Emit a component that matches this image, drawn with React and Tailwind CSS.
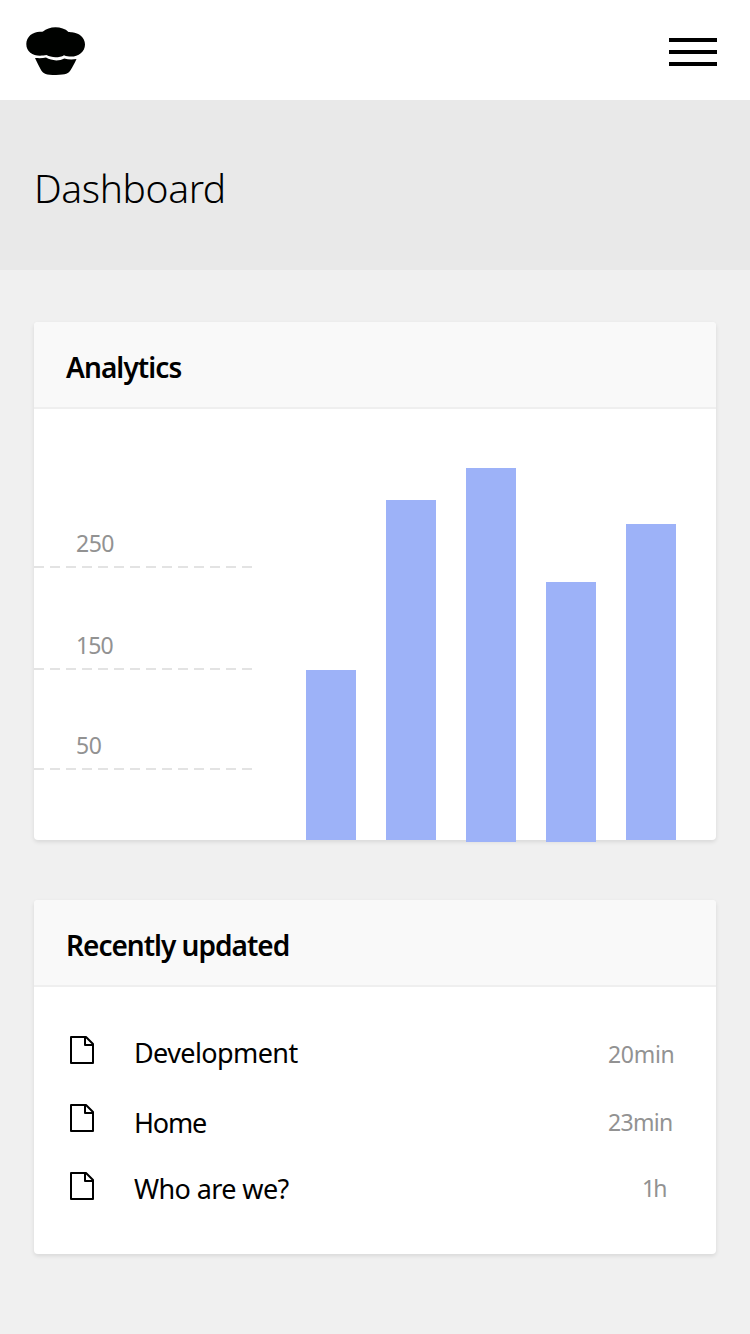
const bars = [
  { height: 'h-[170px]', offset: 'mb-0' },
  { height: 'h-[340px]', offset: 'mb-0' },
  { height: 'h-[374px]', offset: '-mb-0.5' },
  { height: 'h-[260px]', offset: '-mb-0.5' },
  { height: 'h-[316px]', offset: 'mb-0' },
];

const ticks = [
  { label: '250', space: 'pt-[122px]', tracking: 'tracking-[-0.5px]' },
  { label: '150', space: 'pt-[65px]', tracking: 'tracking-[-0.9px]' },
  { label: '50', space: 'pt-[63px]', tracking: 'tracking-[-0.5px]' },
];

const pages = [
  { name: 'Development', time: '20min', nameClass: 'mt-[3px] tracking-[-0.6px]', timeClass: 'mt-3 tracking-[-0.3px]' },
  { name: 'Home', time: '23min', nameClass: 'mt-[5px] tracking-[-1.2px]', timeClass: 'mt-3 tracking-[-0.7px]' },
  { name: 'Who are we?', time: '1h', nameClass: 'mt-[3px] tracking-[-0.6px]', timeClass: 'mt-2.5 ml-[34px] tracking-[-2px]' },
];

function Logo() {
  return (
    <svg className="h-12 w-[60px]" viewBox="0 0 60 48" fill="#000200" aria-hidden="true">
      <path d="M17 4.500C20 1.800 24.500.2 29.500.2s9.800 1.500 13 4.700c1.200 0 1.500.1 3.500.4 7 .6 13 5.500 13 12.200 0 7.300-6.500 12.100-14 12.100-2.500 0-4.500-.4-7-1.400-4.500 2.700-12.500 2.700-17.500-.1-2 .6-4 .6-6.500.6C6.500 28.700.3 24.500.3 17 .3 9.500 7 4.600 14 4.700c1.200 0 2 .1 3-.2Z" />
      <path d="M9 31.100c4 .2 8 .3 11-.5 5.500 3.400 13.500 3.700 18.300.8 3.700 1.200 8 1.300 12.200.6-2 4.500-4 8-6 11.300-1.800 3.200-4.500 4.600-14.500 4.600s-12.700-1.400-14.700-4.500C13.200 40 11 35.500 9 31.100Z" />
    </svg>
  );
}

function FileIcon() {
  return (
    <svg className="mt-1.5 h-7 w-6 shrink-0" viewBox="0 0 24 28" fill="none" stroke="#000" strokeWidth="2" strokeLinejoin="round" aria-hidden="true">
      <path d="M1 1h15l7 7v19H1Z" />
      <path d="M15 1v8h8" />
    </svg>
  );
}

function Card({ title, titleClass, className, children }) {
  return (
    <section className={`rounded bg-white shadow-[0_2px_4px_rgba(0,0,0,0.1)] ${className}`}>
      <header className="h-[87px] rounded-t border-b-2 border-[#efefef] bg-[#f9f9f9] pt-[25px] pl-8">
        <h2 className={`text-[28px] leading-10 font-semibold whitespace-nowrap ${titleClass}`}>{title}</h2>
      </header>
      {children}
    </section>
  );
}

export default function App() {
  return (
    <div className="min-h-[1334px] bg-[#f0f0f0] font-['Noto_Sans',sans-serif] text-black">
      <nav className="flex h-[100px] items-start justify-between bg-white pt-[27px] pr-[33px] pl-[26px]">
        <Logo />
        <button type="button" aria-label="Menu" className="flex flex-col gap-2 pt-[11px]">
          <span className="h-1 w-12 bg-black" />
          <span className="h-1 w-12 bg-black" />
          <span className="h-1 w-12 bg-black" />
        </button>
      </nav>
      <div className="h-[170px] bg-[#e9e9e9] pt-[67px] pl-[34px]">
        <h1 className="text-[39px] leading-[42px] font-light tracking-[-0.4px]">Dashboard</h1>
      </div>
      <main className="flex flex-col gap-[60px] px-[34px] pt-[52px]">
        <Card title="Analytics" titleClass="tracking-[-0.9px]" className="h-[518px]">
          <div className="flex h-[431px]">
            <div className="w-[218px]">
              {ticks.map((t) => (
                <div key={t.label} className={t.space}>
                  <div className={`mb-[11px] pl-[42px] text-[23px] leading-6 text-[#929292] ${t.tracking}`}>{t.label}</div>
                  <div className="h-0.5 bg-[repeating-linear-gradient(90deg,#e3e3e3_0_10px,transparent_10px_16px)]" />
                </div>
              ))}
            </div>
            <div className="ml-[54px] flex items-end gap-[30px]">
              {bars.map((b, i) => (
                <div key={i} className={`w-[50px] bg-[#9db2f8] ${b.height} ${b.offset}`} />
              ))}
            </div>
          </div>
        </Card>
        <Card title="Recently updated" titleClass="tracking-[-1px]" className="h-[354px]">
          <ul className="pt-[43px] pl-9">
            {pages.map((p) => (
              <li key={p.name} className="flex h-[68px] items-start">
                <FileIcon />
                <span className={`ml-10 w-[474px] shrink-0 text-[27px] leading-10 ${p.nameClass}`}>{p.name}</span>
                <span className={`text-[23px] leading-6 text-[#929292] ${p.timeClass}`}>{p.time}</span>
              </li>
            ))}
          </ul>
        </Card>
      </main>
    </div>
  );
}
